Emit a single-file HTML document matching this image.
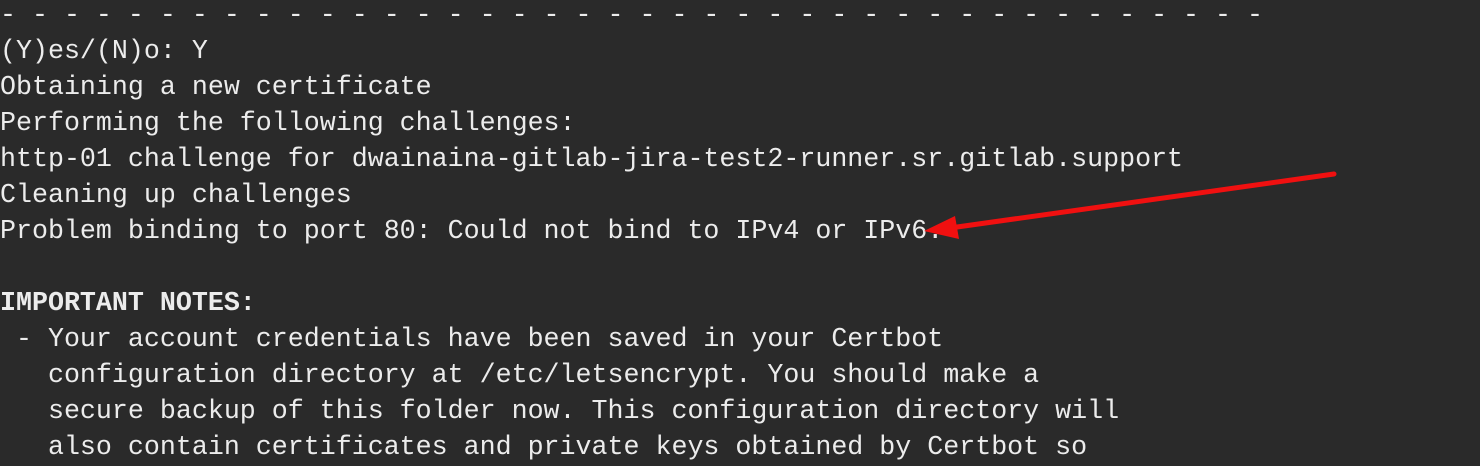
<!DOCTYPE html>
<html><head><style>
html,body{margin:0;padding:0;background:#2a2a2a;width:1480px;height:454px;overflow:hidden}
pre{margin:0;position:absolute;left:0;top:-2px;font-family:"Liberation Mono",monospace;font-size:26.65px;line-height:36px;color:#ececec;white-space:pre}
b{font-weight:bold}
svg{position:absolute;left:0;top:0}
</style></head><body>
<pre>- - - - - - - - - - - - - - - - - - - - - - - - - - - - - - - - - - - - - - - -
(Y)es/(N)o: Y
Obtaining a new certificate
Performing the following challenges:
http-01 challenge for dwainaina-gitlab-jira-test2-runner.sr.gitlab.support
Cleaning up challenges
Problem binding to port 80: Could not bind to IPv4 or IPv6.

<b>IMPORTANT NOTES:</b>
 - Your account credentials have been saved in your Certbot
   configuration directory at /etc/letsencrypt. You should make a
   secure backup of this folder now. This configuration directory will
   also contain certificates and private keys obtained by Certbot so</pre>
<svg width="1480" height="454"><line x1="1334" y1="174" x2="950" y2="228" stroke="#f01010" stroke-width="5" stroke-linecap="round"/><polygon points="924,231 955,216 959,239" fill="#f01010"/></svg>
</body></html>
